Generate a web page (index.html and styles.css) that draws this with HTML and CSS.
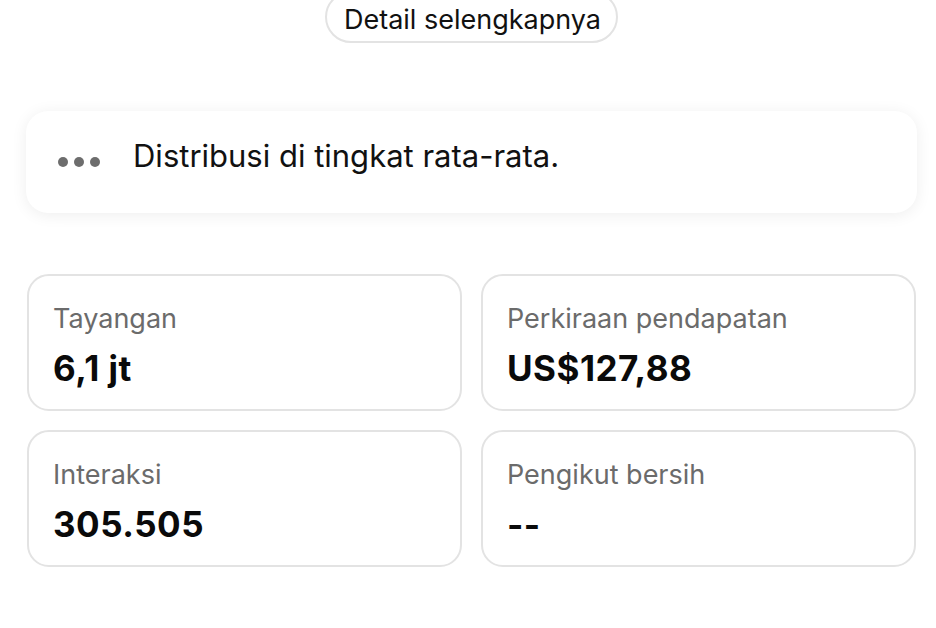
FILE: index.html
```html
<!DOCTYPE html>
<html lang="id">
<head>
    <meta charset="UTF-8">
    <meta name="viewport" content="width=device-width, initial-scale=1.0">
    <title>Statistik</title>
    <link rel="stylesheet" href="styles.css">
</head>
<body>

    <div class="top">
        <button class="pill">Detail selengkapnya</button>
    </div>

    <div class="info-card">
        <span class="dots"><i></i><i></i><i></i></span>
        <span class="info-text">Distribusi di tingkat rata-rata.</span>
    </div>

    <div class="stats">
        <div class="stat">
            <div class="stat-label">Tayangan</div>
            <div class="stat-value">6,1 jt</div>
        </div>
        <div class="stat">
            <div class="stat-label">Perkiraan pendapatan</div>
            <div class="stat-value">US$127,88</div>
        </div>
        <div class="stat">
            <div class="stat-label">Interaksi</div>
            <div class="stat-value">305.505</div>
        </div>
        <div class="stat">
            <div class="stat-label">Pengikut bersih</div>
            <div class="stat-value">--</div>
        </div>
    </div>

</body>
</html>
```

FILE: styles.css
```css
body {
    margin: 0;
    background: white;
    color: black;
    font-family: Inter, "Noto Sans", Arial, sans-serif;
}
.top {
    display: flex;
    justify-content: center;
    margin-top: -9px;
    padding-left: 7px;
}
.pill {
    height: 52px;
    padding: 6px 15px 0 17px;
    border: 2px solid #e3e3e3;
    border-radius: 26px;
    background: white;
    color: #111;
    font-family: inherit;
    font-size: 27px;
    line-height: 32px;
}
.info-card {
    margin: 68px 19px 0 26px;
    height: 102px;
    box-sizing: border-box;
    display: flex;
    align-items: flex-start;
    gap: 33px;
    padding: 26px 0 0 32px;
    background: white;
    border-radius: 22px;
    box-shadow: 0 2px 16px rgba(0, 0, 0, 0.07);
}
.dots {
    display: flex;
    gap: 6px;
    margin-top: 20px;
}
.dots i {
    width: 10px;
    height: 10px;
    border-radius: 50%;
    background: #6d6d6d;
}
.info-text {
    font-size: 31px;
    line-height: 38px;
    color: #111;
}
.stats {
    margin: 61px 20px 0 27px;
    display: grid;
    grid-template-columns: 1fr 1fr;
    gap: 19px;
}
.stat {
    height: 137px;
    box-sizing: border-box;
    border: 2px solid #e3e3e3;
    border-radius: 22px;
    padding: 27px 24px 0 24px;
}
.stat-label {
    font-size: 27px;
    line-height: 32px;
    color: #6b6b6b;
}
.stat-value {
    margin-top: 12px;
    font-size: 35px;
    line-height: 42px;
    font-weight: 700;
    letter-spacing: 0.5px;
    color: #0a0a0a;
}
```
